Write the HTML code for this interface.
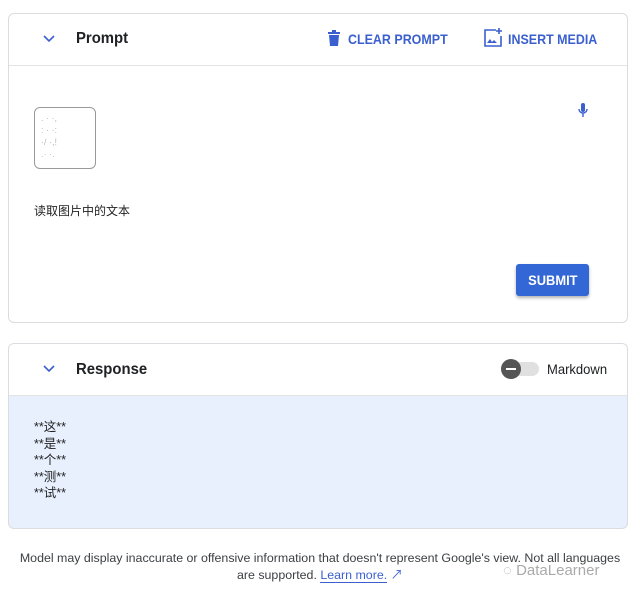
<!DOCTYPE html>
<html><head><meta charset="utf-8"><style>
body{margin:0;width:640px;height:597px;background:#fff;font-family:"Liberation Sans","Noto Sans CJK SC",sans-serif;position:relative;overflow:hidden}
.card{position:absolute;left:8px;width:618px;border:1px solid #dadce0;border-radius:6px;background:#fff;overflow:hidden}
.hdr{height:51px;border-bottom:1px solid #e3e3e3;position:relative}
.title{position:absolute;left:67px;top:16px;font-size:16px;font-weight:bold;color:#202124;transform:scaleX(0.93);transform-origin:left}
.chev{position:absolute;left:33px;top:20px}
.btn{position:absolute;top:17px;font-size:14px;font-weight:bold;color:#3b5fcf;transform:scaleX(0.89);transform-origin:left}
.a{position:absolute}
</style></head><body>
<div class="card" style="top:13px;height:308px">
 <div class="hdr">
  <svg class="chev" width="14" height="10" viewBox="0 0 14 10"><path d="M2 2l5 5 5-5" fill="none" stroke="#3b5fcf" stroke-width="1.6"/></svg>
  <div class="title">Prompt</div>
  <svg class="a" style="left:319px;top:16px" width="12" height="16" viewBox="0 0 12 16"><rect x="0" y="2" width="12" height="2" fill="#3b5fcf"/><rect x="4" y="0" width="4" height="2" fill="#3b5fcf"/><path d="M1 5h10l-1 11H2z" fill="#3b5fcf"/></svg>
  <div class="btn" style="left:339px">CLEAR PROMPT</div>
  <svg class="a" style="left:474px;top:14px" width="20" height="20" viewBox="0 0 20 20"><path d="M13 2H2v16h16V8" fill="none" stroke="#3b5fcf" stroke-width="1.6"/><path d="M16 0v6M13 3h6" stroke="#3b5fcf" stroke-width="1.6"/><path d="M4 15l3-4 2 3 2-2 3 3z" fill="#3b5fcf"/></svg>
  <div class="btn" style="left:499px">INSERT MEDIA</div>
 </div>
 <div class="a" style="left:25px;top:93px;width:62px;height:62px;border:1px solid #999;border-radius:6px;color:#bbb;font-size:9px;line-height:12px;padding:4px 0 0 6px;box-sizing:border-box">. ·  ·,<br>:  · ·:<br>·/ ·,!<br> .·  ·.</div>
 <svg class="a" style="left:569px;top:89px" width="10" height="16" viewBox="0 0 10 16"><rect x="3" y="0" width="4" height="9" rx="2" fill="#3b5fcf"/><path d="M1 6a4 4 0 0 0 8 0M5 10v4" fill="none" stroke="#3b5fcf" stroke-width="1.4"/></svg>
 <div class="a" style="left:25px;top:188px;font-size:12px;color:#222">读取图片中的文本</div>
 <div class="a" style="left:507px;top:250px;width:73px;height:32px;background:#3367d6;border-radius:3px;color:#fff;font-size:14px;font-weight:bold;text-align:center;line-height:32px;box-shadow:0 2px 3px rgba(0,0,0,.3)"><span style="display:inline-block;transform:scaleX(0.92)">SUBMIT</span></div>
</div>
<div class="card" style="top:343px;height:184px;background:#e8f0fe">
 <div class="hdr" style="background:#fff">
  <svg class="chev" width="14" height="10" viewBox="0 0 14 10"><path d="M2 2l5 5 5-5" fill="none" stroke="#3b5fcf" stroke-width="1.6"/></svg>
  <div class="title" style="top:17px">Response</div>
  <div class="a" style="left:494px;top:18px;width:36px;height:14px;background:#e0e0e0;border-radius:7px"></div>
  <div class="a" style="left:492px;top:15px;width:20px;height:20px;background:#555;border-radius:50%"></div>
  <div class="a" style="left:497px;top:24px;width:10px;height:2px;background:#fff"></div>
  <div class="a" style="left:538px;top:17px;font-size:14px;color:#202124;transform:scaleX(0.93);transform-origin:left">Markdown</div>
 </div>
 <div class="a" style="left:25px;top:75px;font-size:12.5px;line-height:16.5px;color:#222">**这**<br>**是**<br>**个**<br>**测**<br>**试**</div>
</div>
<div class="a" style="left:0;width:640px;top:550px;text-align:center;font-size:12.4px;line-height:17px;color:#3c4043">Model may display inaccurate or offensive information that doesn't represent Google's view. Not all languages<br>are supported. <span style="color:#3b5fcf;border-bottom:1px solid #3b5fcf">Learn more.</span> <span style="color:#3b5fcf">↗</span></div>
<div class="a" style="left:503px;top:562px;font-size:15px;color:#aaa">◌ DataLearner</div>
</body></html>
